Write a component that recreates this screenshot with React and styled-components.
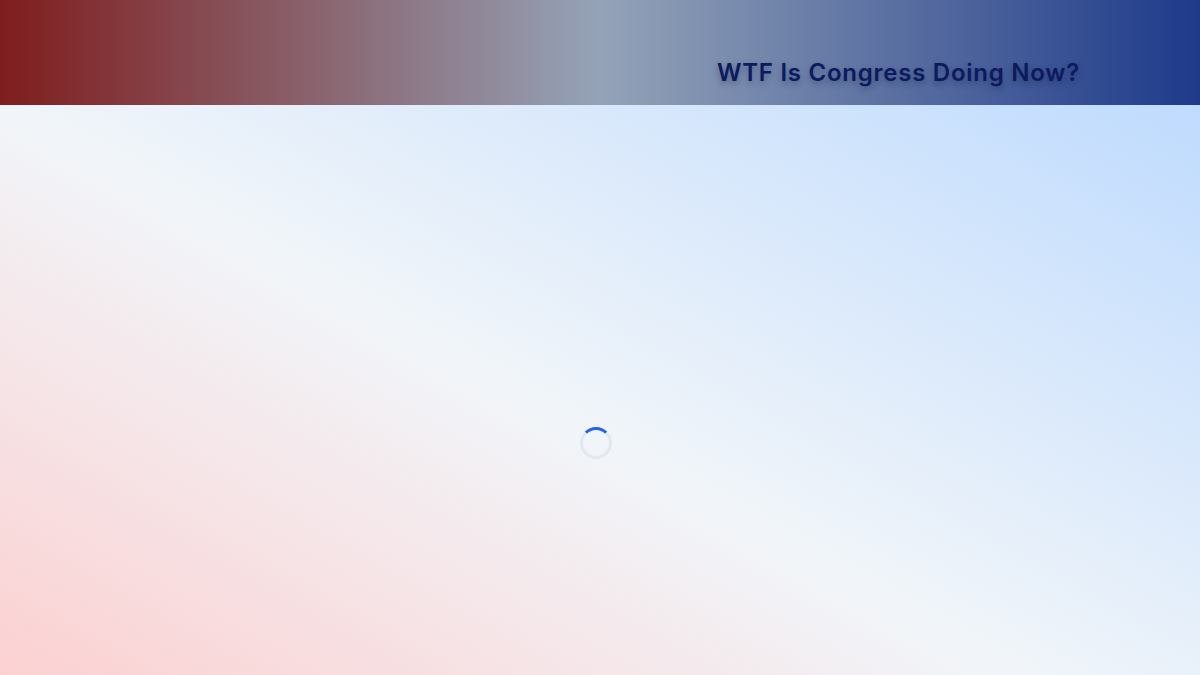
import styled, { createGlobalStyle, keyframes } from "styled-components";

const GlobalStyle = createGlobalStyle`
  html, body {
    margin: 0;
    padding: 0;
    overflow: hidden;
  }
  body {
    font-family: Inter, "Open Sans", "Liberation Sans", sans-serif;
  }
  * {
    box-sizing: border-box;
  }
`;

// the page itself is one screen tall; the main area below the header
// is a full screen too, so the loader sits lower than the middle
const Page = styled.div`
  height: 100vh;
  overflow: hidden;
  display: flex;
  flex-direction: column;
`;

const Header = styled.header`
  flex: none;
  height: 105px;
  background: linear-gradient(to right, #7f1d1d, #94a3b8, #1e3a8a);
  display: flex;
  justify-content: center;
`;

const HeaderInner = styled.div`
  width: 100%;
  max-width: 1024px;
  padding: 57px 32px 16px;
  display: flex;
  justify-content: flex-end;
  align-items: flex-end;
`;

const Title = styled.h1`
  margin: 0;
  font-size: 24px;
  line-height: 32px;
  font-weight: 600;
  letter-spacing: 0.75px;
  color: #0c1a5e;
  text-shadow: 0 3px 6px rgba(15, 23, 60, 0.35);
`;

const Main = styled.main`
  flex: none;
  height: 100vh;
  background: linear-gradient(to top right, #fecaca, #f1f5f9, #bfdbfe);
  display: flex;
  align-items: center;
  justify-content: center;
  padding-right: 8px;
`;

const spin = keyframes`
  to { transform: rotate(360deg); }
`;

const Spinner = styled.div`
  width: 32px;
  height: 32px;
  border-radius: 50%;
  border: 3px solid #e2e8f0;
  border-top-color: #2563eb;
  animation: ${spin} 1s linear infinite;
  animation-play-state: ${(props) => (props.paused ? "paused" : "running")};
`;

export default function App() {
  return (
    <>
      <GlobalStyle />
      <Page>
        <Header>
          <HeaderInner>
            <Title>WTF Is Congress Doing Now?</Title>
          </HeaderInner>
        </Header>
        <Main>
          <Spinner paused />
        </Main>
      </Page>
    </>
  );
}
